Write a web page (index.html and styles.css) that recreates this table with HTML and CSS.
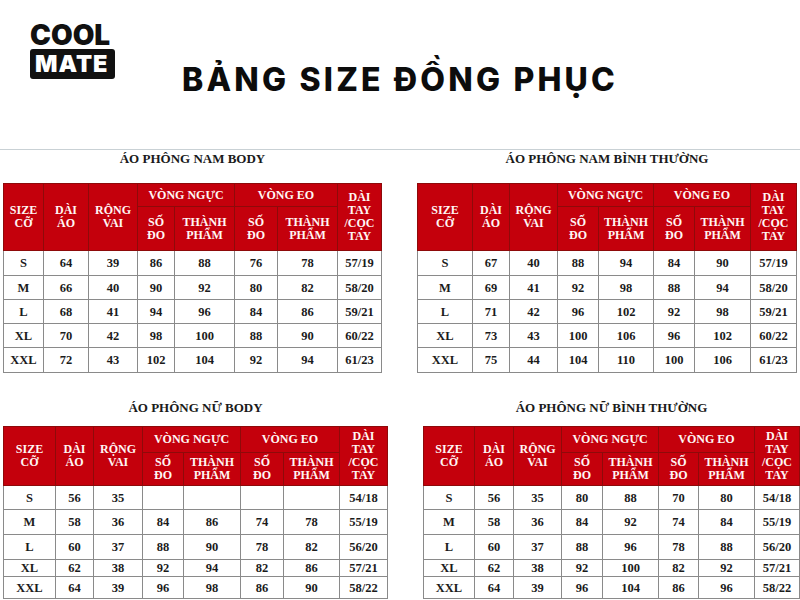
FILE: index.html
```html
<!DOCTYPE html>
<html lang="vi">
<head>
<meta charset="utf-8">
<title>Bảng size đồng phục</title>
<link rel="stylesheet" href="styles.css">
</head>
<body>
<header class="top">
  <div class="logo">
    <span class="logo-cool">COOL</span>
    <span class="logo-mate">MATE</span>
  </div>
  <h1 class="title">BẢNG SIZE ĐỒNG PHỤC</h1>
</header>
<main class="grid">
  <section class="panel p1">
    <h2 class="cap">ÁO PHÔNG NAM BODY</h2>
    <table class="size t1">
      <colgroup><col class="c1"><col class="c2"><col class="c3"><col class="c4"><col class="c5"><col class="c6"><col class="c7"><col class="c8"></colgroup>
      <thead>
        <tr class="h1"><th rowspan="2">SIZE<br>CỠ</th><th rowspan="2">DÀI<br>ÁO</th><th rowspan="2">RỘNG<br>VAI</th><th colspan="2">VÒNG NGỰC</th><th colspan="2">VÒNG EO</th><th rowspan="2">DÀI<br>TAY<br>/CỌC<br>TAY</th></tr>
        <tr class="h2"><th>SỐ<br>ĐO</th><th>THÀNH<br>PHẨM</th><th>SỐ<br>ĐO</th><th>THÀNH<br>PHẨM</th></tr>
      </thead>
      <tbody>
        <tr class="r1"><td>S</td><td>64</td><td>39</td><td>86</td><td>88</td><td>76</td><td>78</td><td>57/19</td></tr>
        <tr class="r2"><td>M</td><td>66</td><td>40</td><td>90</td><td>92</td><td>80</td><td>82</td><td>58/20</td></tr>
        <tr class="r3"><td>L</td><td>68</td><td>41</td><td>94</td><td>96</td><td>84</td><td>86</td><td>59/21</td></tr>
        <tr class="r4"><td>XL</td><td>70</td><td>42</td><td>98</td><td>100</td><td>88</td><td>90</td><td>60/22</td></tr>
        <tr class="r5"><td>XXL</td><td>72</td><td>43</td><td>102</td><td>104</td><td>92</td><td>94</td><td>61/23</td></tr>
      </tbody>
    </table>
  </section>
  <section class="panel p2">
    <h2 class="cap">ÁO PHÔNG NAM BÌNH THƯỜNG</h2>
    <table class="size t2">
      <colgroup><col class="c1"><col class="c2"><col class="c3"><col class="c4"><col class="c5"><col class="c6"><col class="c7"><col class="c8"></colgroup>
      <thead>
        <tr class="h1"><th rowspan="2">SIZE<br>CỠ</th><th rowspan="2">DÀI<br>ÁO</th><th rowspan="2">RỘNG<br>VAI</th><th colspan="2">VÒNG NGỰC</th><th colspan="2">VÒNG EO</th><th rowspan="2">DÀI<br>TAY<br>/CỌC<br>TAY</th></tr>
        <tr class="h2"><th>SỐ<br>ĐO</th><th>THÀNH<br>PHẨM</th><th>SỐ<br>ĐO</th><th>THÀNH<br>PHẨM</th></tr>
      </thead>
      <tbody>
        <tr class="r1"><td>S</td><td>67</td><td>40</td><td>88</td><td>94</td><td>84</td><td>90</td><td>57/19</td></tr>
        <tr class="r2"><td>M</td><td>69</td><td>41</td><td>92</td><td>98</td><td>88</td><td>94</td><td>58/20</td></tr>
        <tr class="r3"><td>L</td><td>71</td><td>42</td><td>96</td><td>102</td><td>92</td><td>98</td><td>59/21</td></tr>
        <tr class="r4"><td>XL</td><td>73</td><td>43</td><td>100</td><td>106</td><td>96</td><td>102</td><td>60/22</td></tr>
        <tr class="r5"><td>XXL</td><td>75</td><td>44</td><td>104</td><td>110</td><td>100</td><td>106</td><td>61/23</td></tr>
      </tbody>
    </table>
  </section>
  <section class="panel p3">
    <h2 class="cap cap-b">ÁO PHÔNG NỮ BODY</h2>
    <table class="size t3">
      <colgroup><col class="c1"><col class="c2"><col class="c3"><col class="c4"><col class="c5"><col class="c6"><col class="c7"><col class="c8"></colgroup>
      <thead>
        <tr class="h1"><th rowspan="2">SIZE<br>CỠ</th><th rowspan="2">DÀI<br>ÁO</th><th rowspan="2">RỘNG<br>VAI</th><th colspan="2">VÒNG NGỰC</th><th colspan="2">VÒNG EO</th><th rowspan="2">DÀI<br>TAY<br>/CỌC<br>TAY</th></tr>
        <tr class="h2"><th>SỐ<br>ĐO</th><th>THÀNH<br>PHẨM</th><th>SỐ<br>ĐO</th><th>THÀNH<br>PHẨM</th></tr>
      </thead>
      <tbody>
        <tr class="r1"><td>S</td><td>56</td><td>35</td><td></td><td></td><td></td><td></td><td>54/18</td></tr>
        <tr class="r2"><td>M</td><td>58</td><td>36</td><td>84</td><td>86</td><td>74</td><td>78</td><td>55/19</td></tr>
        <tr class="r3"><td>L</td><td>60</td><td>37</td><td>88</td><td>90</td><td>78</td><td>82</td><td>56/20</td></tr>
        <tr class="r4"><td>XL</td><td>62</td><td>38</td><td>92</td><td>94</td><td>82</td><td>86</td><td>57/21</td></tr>
        <tr class="r5"><td>XXL</td><td>64</td><td>39</td><td>96</td><td>98</td><td>86</td><td>90</td><td>58/22</td></tr>
      </tbody>
    </table>
  </section>
  <section class="panel p4">
    <h2 class="cap cap-b">ÁO PHÔNG NỮ BÌNH THƯỜNG</h2>
    <table class="size t4">
      <colgroup><col class="c1"><col class="c2"><col class="c3"><col class="c4"><col class="c5"><col class="c6"><col class="c7"><col class="c8"></colgroup>
      <thead>
        <tr class="h1"><th rowspan="2">SIZE<br>CỠ</th><th rowspan="2">DÀI<br>ÁO</th><th rowspan="2">RỘNG<br>VAI</th><th colspan="2">VÒNG NGỰC</th><th colspan="2">VÒNG EO</th><th rowspan="2">DÀI<br>TAY<br>/CỌC<br>TAY</th></tr>
        <tr class="h2"><th>SỐ<br>ĐO</th><th>THÀNH<br>PHẨM</th><th>SỐ<br>ĐO</th><th>THÀNH<br>PHẨM</th></tr>
      </thead>
      <tbody>
        <tr class="r1"><td>S</td><td>56</td><td>35</td><td>80</td><td>88</td><td>70</td><td>80</td><td>54/18</td></tr>
        <tr class="r2"><td>M</td><td>58</td><td>36</td><td>84</td><td>92</td><td>74</td><td>84</td><td>55/19</td></tr>
        <tr class="r3"><td>L</td><td>60</td><td>37</td><td>88</td><td>96</td><td>78</td><td>88</td><td>56/20</td></tr>
        <tr class="r4"><td>XL</td><td>62</td><td>38</td><td>92</td><td>100</td><td>82</td><td>92</td><td>57/21</td></tr>
        <tr class="r5"><td>XXL</td><td>64</td><td>39</td><td>96</td><td>104</td><td>86</td><td>96</td><td>58/22</td></tr>
      </tbody>
    </table>
  </section>
</main>
</body>
</html>
```

FILE: styles.css
```css
* { box-sizing: border-box; }
html, body { margin: 0; padding: 0; }
body {
  width: 800px;
  height: 600px;
  overflow: hidden;
  background: #ffffff;
  color: #111111;
  font-family: "Liberation Serif", "Times New Roman", serif;
}

/* header */
.top {
  display: flex;
  align-items: flex-start;
  height: 150px;
  padding: 22px 0 0 30px;
  border-bottom: 1px solid #c9d1d5;
}
.logo {
  display: flex;
  flex-direction: column;
  width: 85px;
  font-family: Inter, "Noto Sans", sans-serif;
  font-weight: 900;
}
.logo-cool {
  font-size: 28px;
  line-height: 26px;
  letter-spacing: 0px;
  color: #111111;
}
.logo-mate {
  margin-top: 1px;
  height: 30px;
  background: #111111;
  color: #ffffff;
  border-radius: 3px;
  font-size: 23.5px;
  line-height: 30px;
  letter-spacing: 1px;
  padding-left: 5px;
}
.title {
  margin: 42px 0 0 67px;
  font-family: Inter, "Noto Sans", sans-serif;
  font-weight: 800;
  font-size: 32px;
  line-height: 32px;
  letter-spacing: 3.2px;
  color: #0c0c0c;
}

/* grid of tables */
.grid {
  display: grid;
  grid-template-columns: 400px 400px;
  row-gap: 27px;
  padding-top: 1px;
}
.panel {
  display: flex;
  flex-direction: column;
  width: max-content;
}
.p1 { margin-left: 3px; }
.p2 { margin-left: 17px; }
.p3 { margin-left: 3px; }
.p4 { margin-left: 23px; }

.cap {
  margin: 0 0 16px;
  text-align: center;
  font-size: 13px;
  line-height: 16px;
  font-weight: bold;
  color: #1a1a1a;
}
.cap-b { margin-bottom: 10px; }

/* tables */
.size {
  border-collapse: collapse;
  table-layout: fixed;
  font-weight: bold;
  text-align: center;
}
.size th, .size td {
  padding: 0;
  vertical-align: middle;
  text-align: center;
}
.size th {
  background: #c4000c;
  color: #fff6f4;
  font-size: 12px;
  line-height: 13px;
  border: 1px solid #8e0a0a;
}
.size td {
  background: #ffffff;
  color: #1b1b1b;
  font-size: 12.5px;
  line-height: 14px;
  border: 1px solid #8a8a8a;
}
.size tbody tr:first-child td { border-top-color: #9a0f0f; }

/* column widths per table */
.t1 { width: 378px; }
.t1 .c1 { width: 40px; } .t1 .c2 { width: 45px; } .t1 .c3 { width: 49px; } .t1 .c4 { width: 37px; }
.t1 .c5 { width: 60px; } .t1 .c6 { width: 43px; } .t1 .c7 { width: 60px; } .t1 .c8 { width: 44px; }

.t2 { width: 379px; }
.t2 .c1 { width: 55px; } .t2 .c2 { width: 37px; } .t2 .c3 { width: 48px; } .t2 .c4 { width: 41px; }
.t2 .c5 { width: 55px; } .t2 .c6 { width: 41px; } .t2 .c7 { width: 56px; } .t2 .c8 { width: 46px; }

.t3 { width: 384px; }
.t3 .c1 { width: 52px; } .t3 .c2 { width: 38px; } .t3 .c3 { width: 49px; } .t3 .c4 { width: 41px; }
.t3 .c5 { width: 57px; } .t3 .c6 { width: 43px; } .t3 .c7 { width: 56px; } .t3 .c8 { width: 48px; }

.t4 { width: 376px; }
.t4 .c1 { width: 51px; } .t4 .c2 { width: 39px; } .t4 .c3 { width: 48px; } .t4 .c4 { width: 41px; }
.t4 .c5 { width: 56px; } .t4 .c6 { width: 40px; } .t4 .c7 { width: 56px; } .t4 .c8 { width: 45px; }

/* row heights: men's tables */
.t1 .h1, .t2 .h1 { height: 23px; }
.t1 .h2, .t2 .h2 { height: 44px; }
.t1 .r1, .t2 .r1 { height: 25px; }
.t1 .r2, .t2 .r2 { height: 24px; }
.t1 .r3, .t2 .r3 { height: 24px; }
.t1 .r4, .t2 .r4 { height: 24px; }
.t1 .r5, .t2 .r5 { height: 25px; }

/* row heights: women's tables */
.t3 .h1, .t4 .h1 { height: 26px; }
.t3 .h2, .t4 .h2 { height: 33px; }
.t3 .r1, .t4 .r1 { height: 24px; }
.t3 .r2, .t4 .r2 { height: 25px; }
.t3 .r3, .t4 .r3 { height: 25px; }
.t3 .r4, .t4 .r4 { height: 17px; }
.t3 .r5, .t4 .r5 { height: 22px; }
```
